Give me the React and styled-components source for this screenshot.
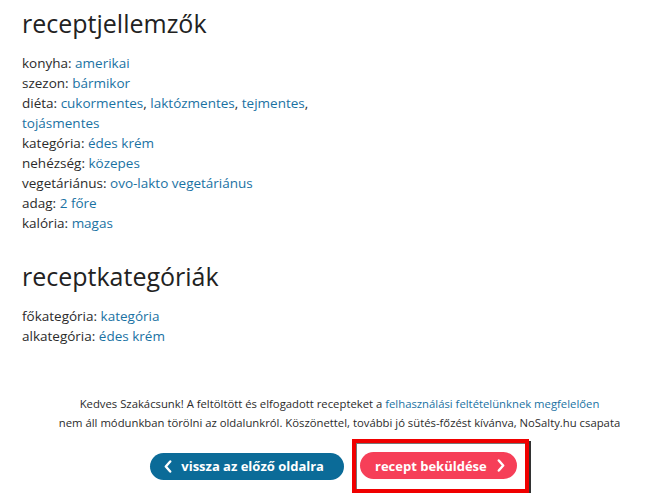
import React from 'react'
import styled, { createGlobalStyle } from 'styled-components'

const GlobalStyle = createGlobalStyle`
  body {
    margin: 0;
    background: #fff;
    font-family: "Open Sans", "DejaVu Sans", sans-serif;
    color: #2b2b2b;
  }
`

const Page = styled.div`
  padding: 7px 15px 0 22px;
`

const Section = styled.section`
  & + & {
    margin-top: 27px;
  }
`

const Heading = styled.h2`
  margin: 0 0 14px;
  font-size: 25px;
  line-height: 32px;
  font-weight: 400;
  color: #222;
`

const List = styled.ul`
  margin: 0;
  padding: 0;
  list-style: none;
  max-width: 320px;
`

const Item = styled.li`
  font-size: 13.5px;
  line-height: 20px;
`

const Link = styled.a`
  color: #1a72a3;
  text-decoration: none;
`

const Notice = styled.p`
  margin: 48px 0 0;
  text-align: center;
  font-size: 11.3px;
  line-height: 19px;
  color: #2b2b2b;
`

const Buttons = styled.div`
  display: flex;
  justify-content: center;
  align-items: center;
  gap: 8px;
  margin-top: 7px;
`

const Button = styled.a`
  display: inline-flex;
  align-items: center;
  gap: ${p => (p.$next ? '10px' : '9px')};
  height: 27px;
  padding: ${p => (p.$next ? '0 12px 0 15px' : '0 20px 0 14px')};
  border-radius: 14px;
  background: ${p => (p.$next ? '#f63f58' : '#0b6b98')};
  color: #fff;
  font-size: 13px;
  font-weight: 700;
  text-decoration: none;
  white-space: nowrap;
`

const Highlight = styled.div`
  padding: 9px 8px 10px 4px;
  border: 4px solid #f00000;
  box-shadow: 2px 2px 0 #333, inset 1px 1px 0 #777;
`

const Chevron = ({ dir }) => (
  <svg width="8" height="13" viewBox="0 0 8 13" fill="none">
    <path
      d={dir === 'left' ? 'M6.2 1.5 1.8 6.5 6.2 11.5' : 'M1.8 1.5 6.2 6.5 1.8 11.5'}
      stroke="#fff"
      strokeWidth="2.4"
      strokeLinecap="round"
      strokeLinejoin="round"
    />
  </svg>
)

const features = [
  ['konyha', ['amerikai']],
  ['szezon', ['bármikor']],
  ['diéta', ['cukormentes', 'laktózmentes', 'tejmentes', 'tojásmentes']],
  ['kategória', ['édes krém']],
  ['nehézség', ['közepes']],
  ['vegetáriánus', ['ovo-lakto vegetáriánus']],
  ['adag', ['2 főre']],
  ['kalória', ['magas']],
]

const categories = [
  ['főkategória', ['kategória']],
  ['alkategória', ['édes krém']],
]

const Rows = ({ rows }) => (
  <List>
    {rows.map(([label, values]) => (
      <Item key={label}>
        {label}:{' '}
        {values.map((v, i) => (
          <React.Fragment key={v}>
            <Link href="#">{v}</Link>
            {i < values.length - 1 ? ', ' : ''}
          </React.Fragment>
        ))}
      </Item>
    ))}
  </List>
)

export default function App() {
  return (
    <Page>
      <GlobalStyle />
      <Section>
        <Heading>receptjellemzők</Heading>
        <Rows rows={features} />
      </Section>
      <Section>
        <Heading>receptkategóriák</Heading>
        <Rows rows={categories} />
      </Section>
      <Notice>
        Kedves Szakácsunk! A feltöltött és elfogadott recepteket a{' '}
        <Link href="#">felhasználási feltételünknek megfelelően</Link>
        <br />
        nem áll módunkban törölni az oldalunkról. Köszönettel, további jó sütés-főzést kívánva, NoSalty.hu csapata
      </Notice>
      <Buttons>
        <Button href="#">
          <Chevron dir="left" />
          vissza az előző oldalra
        </Button>
        <Highlight>
          <Button href="#" $next>
            recept beküldése
            <Chevron dir="right" />
          </Button>
        </Highlight>
      </Buttons>
    </Page>
  )
}
